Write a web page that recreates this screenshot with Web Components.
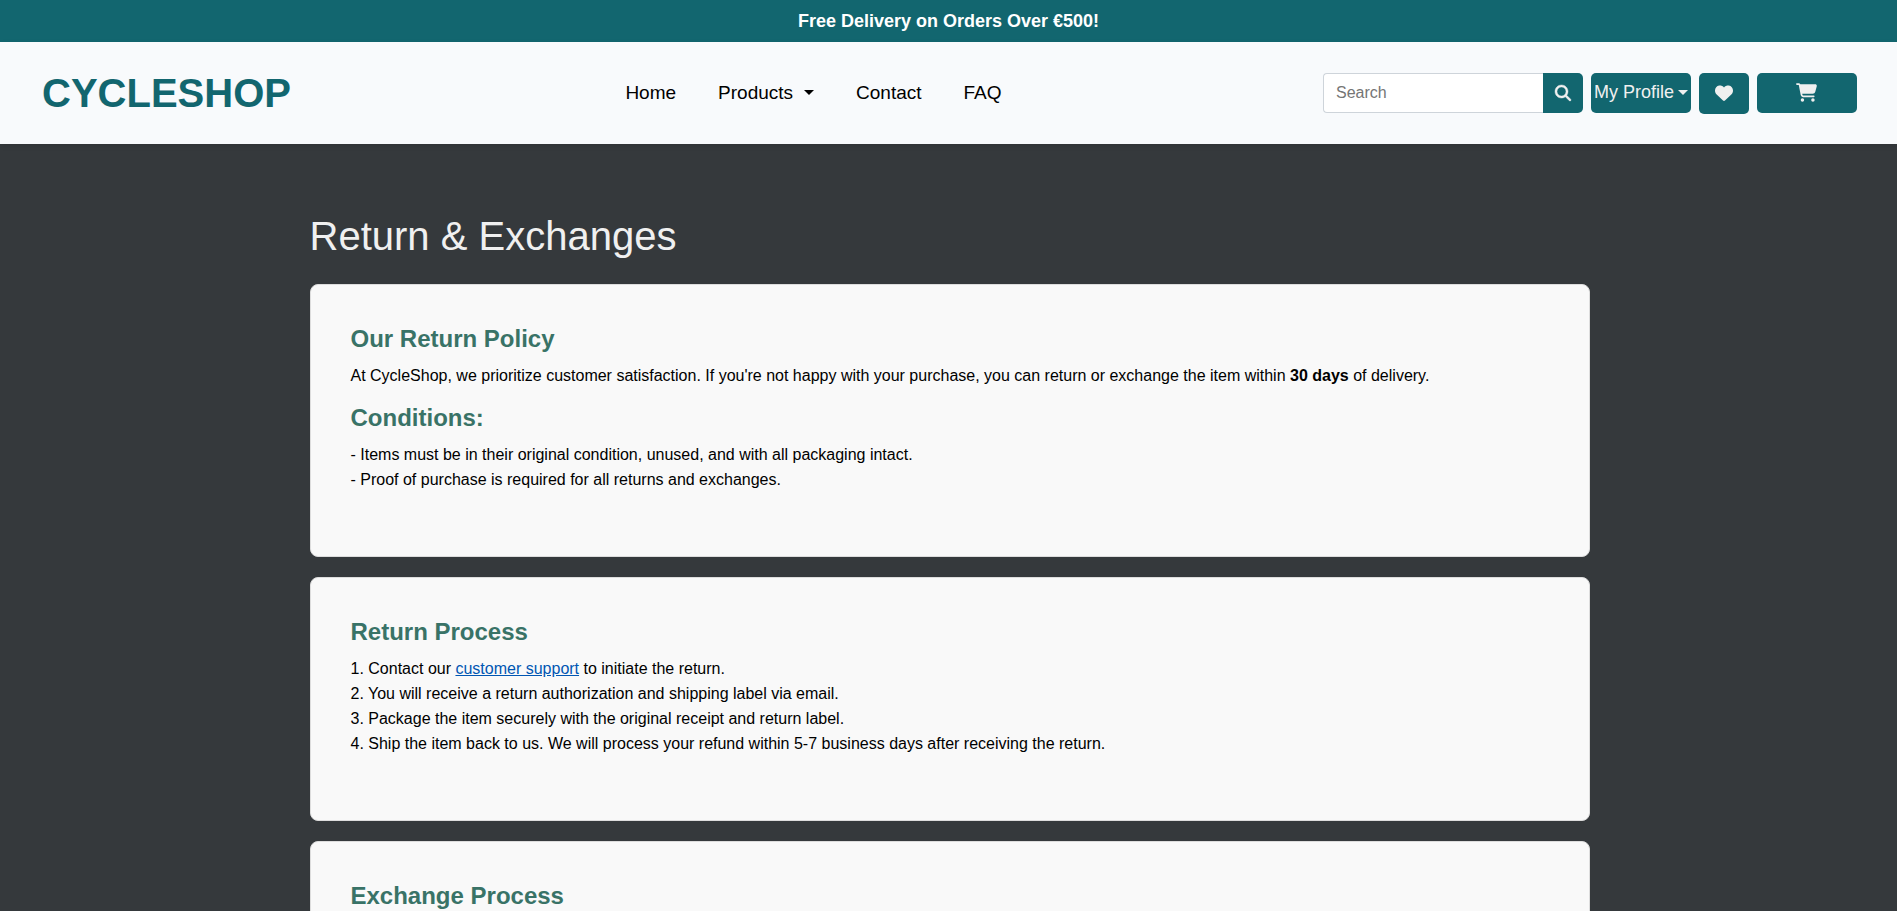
<!DOCTYPE html>
<html lang="en">
<head>
<meta charset="utf-8">
<title>CycleShop - Return &amp; Exchanges</title>
<style>
  html { background: #35393c; }
  body { margin: 0; font-family: "Liberation Sans", Arial, sans-serif; font-size: 16px; line-height: 25px; color: #000; --teal: #12666f; --green: #397367; }
  a.support { color: #0056b3; }
</style>
</head>
<body>
<promo-banner>Free Delivery on Orders Over €500!</promo-banner>
<site-header></site-header>
<page-main>
  <span slot="title">Return &amp; Exchanges</span>
  <info-card>
    <policy-section heading="Our Return Policy">At CycleShop, we prioritize customer satisfaction. If you're not happy with your purchase, you can return or exchange the item within <strong>30 days</strong> of delivery.</policy-section>
    <policy-section heading="Conditions:">- Items must be in their original condition, unused, and with all packaging intact.<br>- Proof of purchase is required for all returns and exchanges.</policy-section>
  </info-card>
  <info-card>
    <policy-section heading="Return Process">1. Contact our <a class="support" href="#contact">customer support</a> to initiate the return.<br>2. You will receive a return authorization and shipping label via email.<br>3. Package the item securely with the original receipt and return label.<br>4. Ship the item back to us. We will process your refund within 5-7 business days after receiving the return.</policy-section>
  </info-card>
  <info-card>
    <policy-section heading="Exchange Process"></policy-section>
  </info-card>
</page-main>
<script>
const define = (name, html, setup) => customElements.define(name, class extends HTMLElement {
  constructor() {
    super();
    this.attachShadow({ mode: "open" }).innerHTML = html;
  }
  connectedCallback() { if (setup) setup(this, this.shadowRoot); }
});

define("promo-banner", `
<style>
  :host { display: block; background: var(--teal); color: #fff; font-size: 18px; font-weight: 700; line-height: 22px; padding: 10px; text-align: center; }
</style>
<slot></slot>`);

define("site-header", `
<style>
  :host { display: block; position: relative; background: #f8fafc; box-shadow: 0 2px 5px rgba(0,0,0,.1); }
  header { display: flex; align-items: center; justify-content: space-between; padding: 30px 40px; min-height: 42px; }
  .logo { color: var(--teal); font-size: 40px; font-weight: 700; line-height: 42px; text-decoration: none; padding: 0 13px 0 2px; }
</style>
<header>
  <a class="logo" href="#home">CYCLESHOP</a>
  <main-nav></main-nav>
  <header-tools></header-tools>
</header>`);

define("main-nav", `
<style>
  :host { display: block; }
  nav { display: flex; gap: 42px; font-size: 19px; line-height: 28px; }
  a { color: #000; text-decoration: none; }
  .drop { display: flex; align-items: center; gap: 11px; }
  .drop::after { content: ""; border: 5px solid transparent; border-top-color: currentColor; border-bottom: 0; margin-bottom: 2px; }
</style>
<nav>
  <a href="#home">Home</a>
  <a class="drop" href="#products">Products</a>
  <a href="#contact">Contact</a>
  <a href="#faq">FAQ</a>
</nav>`);

define("header-tools", `
<style>
  :host { display: block; }
  div { display: flex; gap: 8px; align-items: flex-start; }
  form { display: flex; }
  input { box-sizing: border-box; width: 220px; height: 40px; margin: 0; padding: 0 12px; border: 1px solid #ced4da; border-right: 0; border-radius: 4px 0 0 4px; background: #fff; font: inherit; font-size: 16px; }
  input::placeholder { color: #757575; }
  button { display: flex; align-items: center; justify-content: center; gap: 4px; width: 100px; height: 40px; margin: 0; padding: 0; border: 0; border-radius: 5px; background: var(--teal); color: #f0f0f0; font: inherit; font-size: 18px; white-space: nowrap; }
  button.search { width: 40px; border-radius: 0 5px 5px 0; }
  button.wish { width: 50px; height: 41px; }
  .profile::after { content: ""; border: 5px solid transparent; border-top-color: currentColor; border-bottom: 0; }
  svg { display: block; fill: currentColor; }
  .search svg { stroke: currentColor; stroke-width: 14; overflow: visible; }
</style>
<div>
  <form>
    <input type="search" placeholder="Search" aria-label="Search">
    <button class="search" type="button" aria-label="Search"><svg width="16" height="16" viewBox="0 0 512 512"><path d="M416 208c0 45.900-14.900 88.300-40 122.700L502.600 457.400c12.500 12.500 12.500 32.800 0 45.300s-32.800 12.500-45.300 0L330.700 376c-34.400 25.200-76.800 40-122.700 40C93.100 416 0 322.900 0 208S93.100 0 208 0S416 93.100 416 208zM208 352a144 144 0 1 0 0-288 144 144 0 1 0 0 288z"/></svg></button>
  </form>
  <button class="profile" type="button">My Profile</button>
  <button class="wish" type="button" aria-label="Wishlist"><svg width="18" height="18" viewBox="0 0 512 512"><path d="M47.600 300.400L228.300 469.100c7.500 7 17.400 10.900 27.700 10.900s20.200-3.900 27.700-10.900L464.400 300.400c30.400-28.300 47.600-68 47.600-109.500v-5.800c0-69.900-50.500-129.500-119.400-141C347 36.500 300.600 51.400 268 84L256 96 244 84c-32.600-32.600-79-47.500-124.600-39.900C50.500 55.600 0 115.200 0 185.100v5.800c0 41.500 17.200 81.200 47.600 109.500z"/></svg></button>
  <button type="button" aria-label="Cart"><svg width="21" height="19" viewBox="0 0 576 512"><path d="M0 24C0 10.700 10.700 0 24 0H69.500c22 0 41.500 12.800 50.600 32h411c26.300 0 45.500 25 38.600 50.400l-41 152.300c-8.500 31.400-37 53.300-69.500 53.300H170.700l5.400 28.500c2.200 11.300 12.100 19.500 23.600 19.500H488c13.300 0 24 10.700 24 24s-10.700 24-24 24H199.700c-34.600 0-64.300-24.600-70.700-58.500L77.400 54.500c-.7-3.800-4-6.500-7.900-6.500H24C10.700 48 0 37.300 0 24zM128 464a48 48 0 1 1 96 0 48 48 0 1 1-96 0zm336-48a48 48 0 1 1 0 96 48 48 0 1 1 0-96z"/></svg></button>
</div>`);

define("page-main", `
<style>
  :host { display: block; max-width: 1280px; margin: 0 auto; padding: 68px 16px 40px 18px; }
  h1 { margin: 0 0 24px; color: #f0f0f0; font-size: 40px; font-weight: 400; line-height: 48px; }
  section { display: flex; flex-direction: column; gap: 20px; }
</style>
<main>
  <h1><slot name="title"></slot></h1>
  <section><slot></slot></section>
</main>`);

define("info-card", `
<style>
  :host { display: flex; flex-direction: column; gap: 15px; background: #f9f9f9; border: 1px solid #ddd; border-radius: 8px; padding: 39px 40px 64px; }
</style>
<slot></slot>`);

define("policy-section", `
<style>
  :host { display: block; }
  h2 { margin: 0 0 10px; color: var(--green); font-size: 24px; font-weight: 700; line-height: 29px; }
  p { margin: 0; }
</style>
<h2></h2>
<p><slot></slot></p>`, (el, root) => { root.querySelector("h2").textContent = el.getAttribute("heading"); });
</script>
</body>
</html>
